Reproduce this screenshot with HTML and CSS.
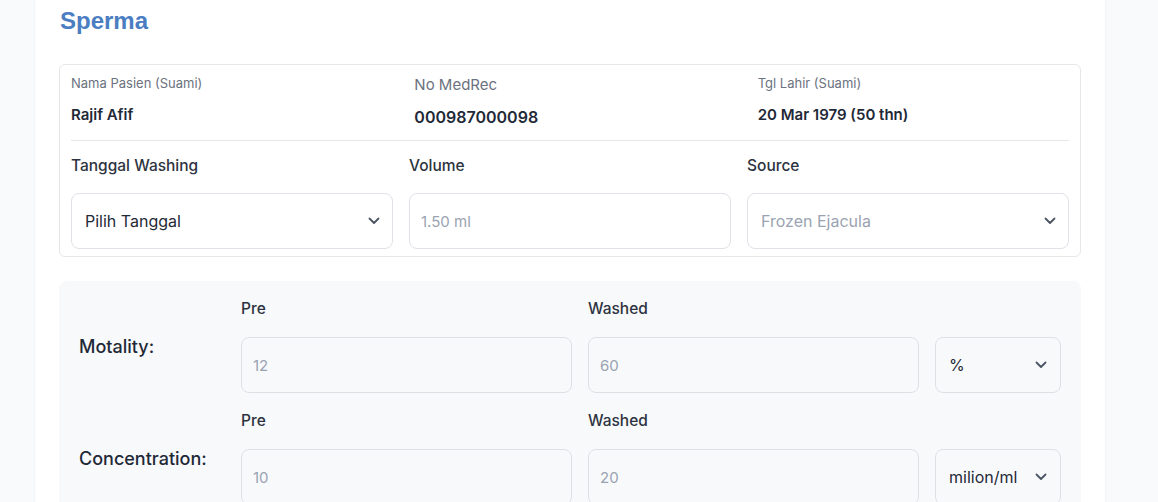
FILE: index.html
```html
<!DOCTYPE html>
<html lang="id">
<head>
<meta charset="utf-8">
<title>Sperma</title>
<link rel="stylesheet" href="styles.css">
</head>
<body>
<div class="card">
  <h2 class="title">Sperma</h2>
  <div class="box">
    <div class="info">
      <div class="info-cell">
        <div class="info-label">Nama Pasien (Suami)</div>
        <div class="info-value">Rajif Afif</div>
      </div>
      <div class="info-cell mid">
        <div class="info-label big">No MedRec</div>
        <div class="info-value big">000987000098</div>
      </div>
      <div class="info-cell">
        <div class="info-label">Tgl Lahir (Suami)</div>
        <div class="info-value">20 Mar 1979 (50 thn)</div>
      </div>
    </div>
    <div class="fields">
      <div class="field">
        <div class="field-label">Tanggal Washing</div>
        <div class="control select"><span class="val">Pilih Tanggal</span><svg class="chev" width="12" height="8" viewBox="0 0 12 8"><path d="M1.5 1.5 6 6l4.5-4.5" fill="none" stroke="#4b5563" stroke-width="1.8" stroke-linecap="round" stroke-linejoin="round"/></svg></div>
      </div>
      <div class="field">
        <div class="field-label">Volume</div>
        <div class="control input"><span class="ph">1.50 ml</span></div>
      </div>
      <div class="field">
        <div class="field-label">Source</div>
        <div class="control select src"><span class="ph">Frozen Ejacula</span><svg class="chev" width="12" height="8" viewBox="0 0 12 8"><path d="M1.5 1.5 6 6l4.5-4.5" fill="none" stroke="#4b5563" stroke-width="1.8" stroke-linecap="round" stroke-linejoin="round"/></svg></div>
      </div>
    </div>
  </div>
  <div class="measures">
    <div class="mrow">
      <div class="mlabel">Motality:</div>
      <div class="mhead c2">Pre</div>
      <div class="mhead c3">Washed</div>
      <div class="minput c2"><span class="ph">12</span></div>
      <div class="minput c3"><span class="ph">60</span></div>
      <div class="munit c4"><span class="val">%</span><svg class="chev" width="12" height="8" viewBox="0 0 12 8"><path d="M1.5 1.5 6 6l4.5-4.5" fill="none" stroke="#4b5563" stroke-width="1.8" stroke-linecap="round" stroke-linejoin="round"/></svg></div>
    </div>
    <div class="mrow">
      <div class="mlabel">Concentration:</div>
      <div class="mhead c2">Pre</div>
      <div class="mhead c3">Washed</div>
      <div class="minput c2"><span class="ph">10</span></div>
      <div class="minput c3"><span class="ph">20</span></div>
      <div class="munit c4"><span class="val">milion/ml</span><svg class="chev" width="12" height="8" viewBox="0 0 12 8"><path d="M1.5 1.5 6 6l4.5-4.5" fill="none" stroke="#4b5563" stroke-width="1.8" stroke-linecap="round" stroke-linejoin="round"/></svg></div>
    </div>
  </div>
</div>
</body>
</html>
```

FILE: styles.css
```css
* { box-sizing: border-box; }
html, body { margin: 0; padding: 0; }
body {
  background: #f9fafb;
  font-family: Inter, "Noto Sans", sans-serif;
  color: #1f2937;
  height: 502px;
  overflow: hidden;
}
.card {
  margin-left: 35px;
  width: 1070px;
  min-height: 502px;
  background: #ffffff;
  box-shadow: 0 0 3px rgba(15, 23, 42, 0.06);
  padding: 5px 24px 0 24px;
}
.title {
  margin: 0 0 27px 1px;
  font-family: "Liberation Sans", Arial, sans-serif;
  font-weight: 700;
  font-size: 24px;
  line-height: 32px;
  color: #4a7dc1;
}
.box {
  border: 1px solid #e5e7eb;
  border-radius: 6px;
  padding: 9px 11px 7px 11px;
}
.info {
  display: grid;
  grid-template-columns: 1fr 1fr 1fr;
  column-gap: 32px;
  height: 67px;
  border-bottom: 1px solid #e5e7eb;
}
.info-label {
  font-size: 13px;
  line-height: 18px;
  color: #6b7280;
}
.info-label.big {
  font-size: 15px;
  line-height: 20px;
  margin-top: 1px;
}
.info-value {
  margin-top: 12px;
  font-size: 15px;
  line-height: 22px;
  font-weight: 600;
  color: #1f2937;
}
.info-value.big {
  margin-top: 11px;
  font-size: 16px;
}
.fields {
  display: grid;
  grid-template-columns: 1fr 1fr 1fr;
  column-gap: 16px;
  padding-top: 15px;
}
.field-label {
  font-size: 15.5px;
  line-height: 20px;
  font-weight: 500;
  color: #2d3340;
  margin-bottom: 17px;
}
.control {
  height: 56px;
  border: 1px solid #dfe2e7;
  border-radius: 8px;
  background: #ffffff;
  display: flex;
  align-items: center;
  justify-content: space-between;
  padding: 0 12px 0 13px;
  font-size: 16px;
}
.control.input { padding-left: 11px; }
.control.src { padding-left: 13px; }
.control .ph { font-size: 15px; }
.control.src .ph { font-size: 16px; }
.val { color: #1f2937; }
.ph { color: #9aa3b2; }
.chev { display: block; flex: none; }
.measures {
  margin-top: 24px;
  background: #f8f9fb;
  border-radius: 8px;
  padding: 18px 20px 18px 20px;
  display: flex;
  flex-direction: column;
  gap: 18px;
}
.mrow {
  display: grid;
  grid-template-columns: 146px 331px 331px 126px;
  grid-template-rows: 20px 56px;
  column-gap: 16px;
  row-gap: 18px;
}
.mlabel {
  grid-column: 1;
  grid-row: 1 / 3;
  align-self: center;
  font-size: 18px;
  font-weight: 500;
  color: #1f2937;
}
.mhead {
  grid-row: 1;
  font-size: 15.5px;
  line-height: 20px;
  font-weight: 500;
  color: #2d3340;
}
.c2 { grid-column: 2; }
.c3 { grid-column: 3; }
.c4 { grid-column: 4; }
.minput, .munit {
  grid-row: 2;
  border: 1px solid #dde1e6;
  border-radius: 8px;
  display: flex;
  align-items: center;
  font-size: 15px;
}
.minput { padding-left: 11px; }
.munit {
  justify-content: space-between;
  padding: 0 13px 0 13px;
  font-size: 16px;
}
```
